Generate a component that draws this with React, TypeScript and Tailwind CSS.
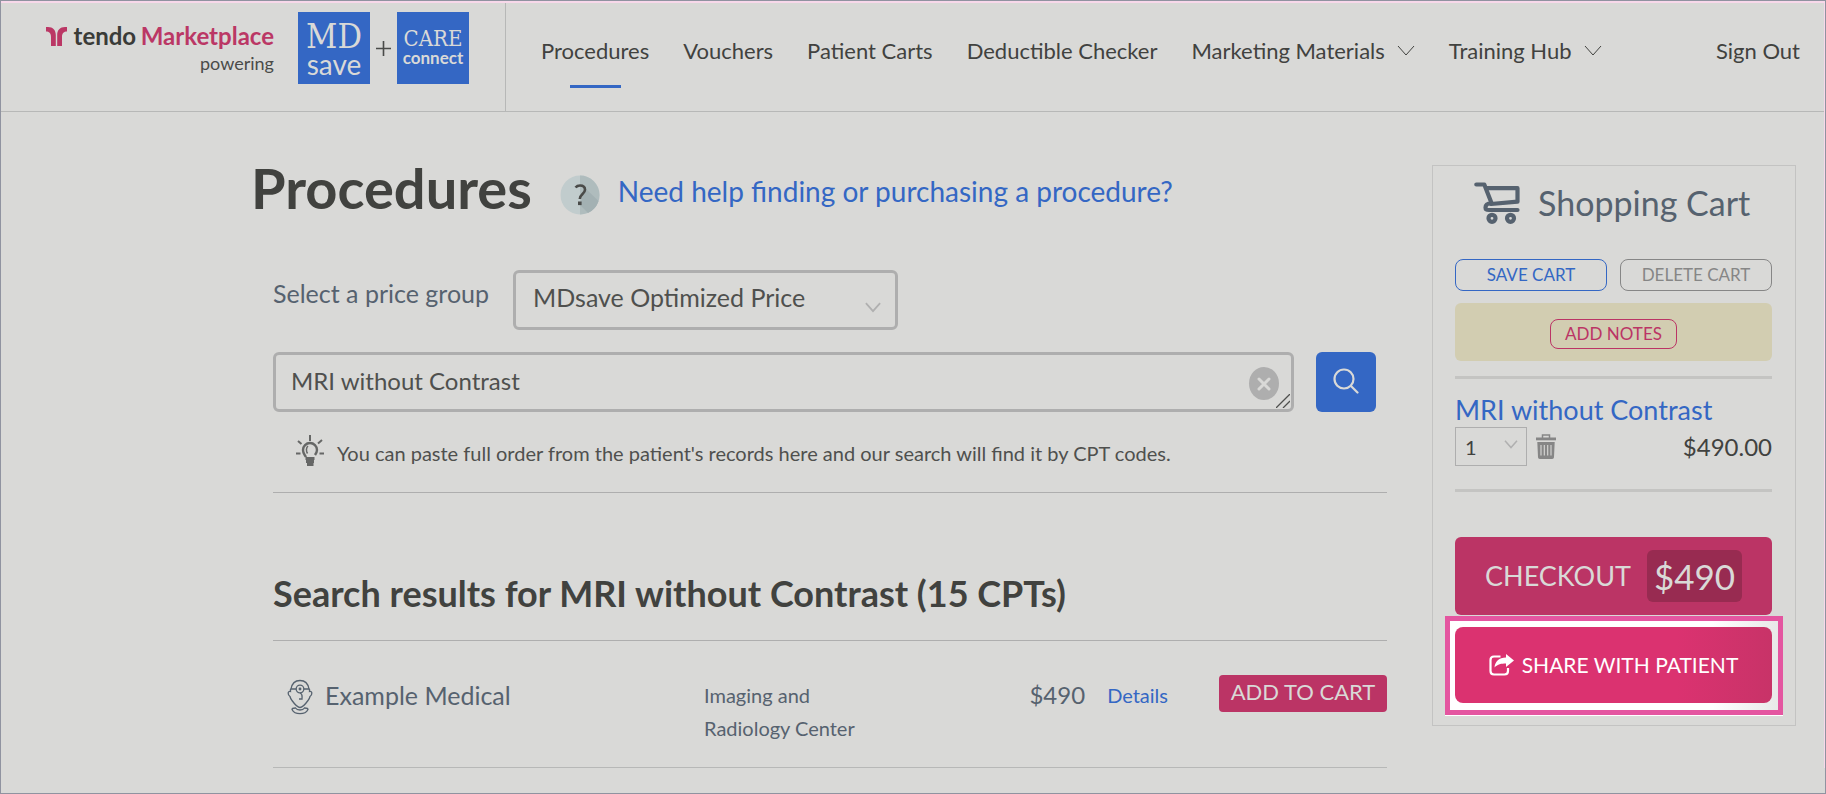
import type { ReactNode } from "react";

interface NavItem {
  label: string;
  active?: boolean;
  menu?: boolean;
}

const NAV_ITEMS: NavItem[] = [
  { label: "Procedures", active: true },
  { label: "Vouchers" },
  { label: "Patient Carts" },
  { label: "Deductible Checker" },
  { label: "Marketing Materials", menu: true },
  { label: "Training Hub", menu: true },
];

const RESULTS = [
  { name: "Example Medical", type: "Imaging and Radiology Center", price: "$490" },
];

function Chevron({ className }: { className: string }) {
  return (
    <svg viewBox="0 0 18 12" fill="none" stroke="currentColor" className={className} aria-hidden="true">
      <path d="M1 1l8 9 8-9" />
    </svg>
  );
}

function TendoMark() {
  return (
    <svg viewBox="0 0 21 19" className="mr-[2px] h-[19px] w-[21px]" fill="#bb3765" aria-hidden="true">
      <path d="M0 0h2c5 0 7.800 3 7.800 8v11H5V10C5 6 3 4.500 0 4.500z" />
      <path d="M21 0h-2c-5 0-7.800 3-7.800 8v11H16V10c0-4 2-5.500 5-5.500z" />
    </svg>
  );
}

function HelpIcon() {
  return (
    <svg viewBox="0 0 40 40" className="size-10 shrink-0" aria-hidden="true">
      <circle cx="20" cy="20" r="19.500" fill="#c1cccd" />
      <path d="M20 .5a19.500 19.500 0 0 1 0 39z" fill="#afbcbd" />
      <path d="M25 13l13.500 13A19.500 19.500 0 0 1 28 38l-8-8z" fill="#a3b1b3" />
      <path
        d="M15.500 12.500c1.200-1.400 2.600-2 4.500-2 3 0 5 1.600 5 4.200 0 4.300-5.200 4.300-5.200 9.300"
        fill="none"
        stroke="#4a4b49"
        strokeWidth="2.600"
      />
      <rect x="18" y="26.500" width="3.600" height="3.600" fill="#4a4b49" />
    </svg>
  );
}

function BulbIcon() {
  return (
    <svg viewBox="0 0 28 31" className="h-[31px] w-7 shrink-0" fill="none" stroke="#666766" aria-hidden="true">
      <path d="M14 0v6M2 6l3.500 3M26 5l-4 3.500M0 18.500h4.500M23.500 18.500H28" strokeWidth="2" />
      <path d="M10 22c-1-2-3-3-3-7a7 7 0 0 1 14 0c0 2-1 3.500-2 5" strokeWidth="2.400" />
      <path d="M12 11c-2 1.500-2 5-.5 7.500" strokeWidth="1.500" />
      <path d="M9.500 23.500h9M10 26.500h8M11 29.500h6.500" strokeWidth="2.800" />
    </svg>
  );
}

function DoctorIcon() {
  return (
    <svg viewBox="0 0 26 36" className="h-9 w-[26px] shrink-0" fill="none" stroke="#56626f" strokeWidth="1.300" aria-hidden="true">
      <path d="M4 10C5 4 8 1.500 13 1.500S21 4 22 10" />
      <path d="M3.500 10H9M17 10h5.500" />
      <circle cx="13" cy="10" r="3.800" />
      <circle cx="13" cy="10" r=".8" fill="#56626f" />
      <path d="M3.500 10v2.500C.5 11.500.5 16 3 17.500c.5 2 1 3 2 4 2.500 3.500 5.500 7 8 7s5.500-3.500 8-7c1-1 1.500-2 2-4 2.500-1.500 2.500-6-.5-5V10" />
      <path d="M13 14c3 1 2 3 2 6h-3" />
      <path d="M8.500 29c-2.500 0-3.500.5-3.500 1.500 1.500 3 4 4.200 8 4.200s6.500-1.200 8-4.200c0-1-1-1.500-3.500-1.500-1 1.500-2.500 2-4.500 2s-3.500-.5-4.500-2z" />
    </svg>
  );
}

function CartIcon() {
  return (
    <svg
      viewBox="0 0 46 42"
      className="h-[42px] w-[46px] shrink-0"
      fill="none"
      stroke="#56626f"
      strokeWidth="4.200"
      strokeLinejoin="round"
      strokeLinecap="round"
      aria-hidden="true"
    >
      <path d="M2.300 2.500h8L17.500 21c-4.500.5-6 2-6 4.500 0 2 1.500 2.500 3.500 2.500h28.500" />
      <path d="M12.500 6.200h31v13.500L17 22" />
      <circle cx="18" cy="36.300" r="3.500" />
      <circle cx="36.500" cy="36.300" r="3.500" />
    </svg>
  );
}

function TrashIcon() {
  return (
    <svg viewBox="0 0 20 25" className="h-[25px] w-5" aria-hidden="true">
      <path d="M6.500 4V1h7v3" fill="none" stroke="#868686" strokeWidth="1.500" />
      <rect y="3.500" width="20" height="2.800" fill="#868686" />
      <path d="M1.300 8h17.400L18 23c0 1-.8 2-1.800 2H3.800c-1 0-1.800-1-1.800-2z" fill="#868686" />
      <path d="M5 11v10.500M8.300 11v10.500M11.700 11v10.500M15 11v10.500" stroke="#d9d9d7" strokeWidth="1.100" />
    </svg>
  );
}

function ShareIcon() {
  return (
    <svg viewBox="0 0 25 22" className="h-[22px] w-[25px] shrink-0" aria-hidden="true">
      <path d="M11.500 2.500H5c-2.500 0-3.500 1-3.500 3.500v11c0 2.500 1 3.500 3.500 3.500h10.500c2.500 0 3.500-1 3.500-3.500v-3" fill="none" stroke="#fff" strokeWidth="2.200" />
      <path d="M17 0l8 6.500-8 6.500V9.500c-5 0-8 .5-11.500 4C6 7.500 10 3.500 17 3.500z" fill="#fff" />
    </svg>
  );
}

function LogoTile({ children }: { children: ReactNode }) {
  return (
    <div className="flex size-[72px] flex-col items-center justify-center bg-[#3467c4] text-[#d9d9d7]">
      {children}
    </div>
  );
}

function Header() {
  return (
    <header className="flex h-[109px] border-b border-[#b7b8b7]">
      <div className="flex w-[505px] shrink-0 items-start border-r border-[#b7b8b7] pt-[9px] pl-[45px]">
        <div className="flex w-[228px] flex-col items-end pt-[9px]">
          <div className="flex w-full items-center justify-between text-2xl leading-[30px] font-bold">
            <TendoMark />
            <span className="text-[#3a3b38]">tendo</span>
            <span className="text-[#bb3765]">Marketplace</span>
          </div>
          <span className="text-lg leading-[24px] text-[#4a4b49]">powering</span>
        </div>
        <div className="ml-6 flex items-center gap-[6px]">
          <LogoTile>
            <span className="font-['DejaVu_Serif_Condensed','DejaVu_Serif',serif] text-[34px] leading-[32px]">MD</span>
            <span className="text-[28px] leading-[24px]">save</span>
          </LogoTile>
          <svg viewBox="0 0 14 14" className="size-[15px]" stroke="#4a4b49" strokeWidth="1.500" aria-label="plus">
            <path d="M7 0v14M0 7h14" />
          </svg>
          <LogoTile>
            <span className="font-['DejaVu_Serif_Condensed','DejaVu_Serif',serif] text-[22px] leading-[20px]">CARE</span>
            <span className="text-[17px] leading-[18px] font-bold">connect</span>
          </LogoTile>
        </div>
      </div>

      <nav className="flex flex-1 items-start gap-[34px] pt-[34px] pr-6 pl-[35px] text-[22px] leading-[28px] whitespace-nowrap text-[#41423f]">
        {NAV_ITEMS.map((item) => (
          <a key={item.label} href="#" className="flex flex-col items-center">
            <span className="flex items-center gap-3">
              {item.label}
              {item.menu && <Chevron className="h-3 w-[18px]" />}
            </span>
            {item.active && <span className="mt-5 h-[3px] w-[51px] bg-[#3467c4]" />}
          </a>
        ))}
        <a href="#" className="ml-auto">
          Sign Out
        </a>
      </nav>
    </header>
  );
}

function SearchForm() {
  return (
    <form className="flex flex-col" onSubmit={(e) => e.preventDefault()}>
      <div className="flex items-start gap-6">
        <label htmlFor="price-group" className="pt-[7px] text-[25px] leading-[32px] text-[#56626f]">
          Select a price group
        </label>
        <div className="relative">
          <select
            id="price-group"
            className="h-[60px] w-[385px] appearance-none rounded-md border-3 border-[#aeaeae] bg-transparent pb-1 pl-[17px] text-[25px] text-[#4f504e]"
          >
            <option>MDsave Optimized Price</option>
          </select>
          <Chevron className="pointer-events-none absolute right-[17px] bottom-[17px] h-[11px] w-4 stroke-2 text-[#b0b0b0]" />
        </div>
      </div>

      <div className="mt-[22px] flex items-start gap-[22px] pr-[11px]">
        <div className="relative flex-1">
          <textarea
            aria-label="Search procedures"
            defaultValue="MRI without Contrast"
            className="block h-[60px] w-full resize-none overflow-hidden rounded-md border-3 border-[#aeaeae] bg-transparent px-[15px] py-[10px] text-2xl leading-[32px] text-[#4f504e]"
          />
          <button
            type="button"
            aria-label="Clear search"
            className="absolute top-[15px] right-[15px] flex h-[33px] w-[30px] items-center justify-center rounded-[50%] bg-[#aeaeae]"
          >
            <svg viewBox="0 0 14 14" className="size-[14px]" stroke="#d9d9d7" strokeWidth="3" strokeLinecap="round">
              <path d="M2 2l10 10M12 2L2 12" />
            </svg>
          </button>
          <svg viewBox="0 0 14 14" className="absolute right-[4px] bottom-[4px] size-[14px]" stroke="#4f504e" strokeWidth="1.300">
            <path d="M0 14L14 0M7 14l7-7" />
          </svg>
        </div>
        <button type="submit" aria-label="Search" className="flex size-[60px] items-center justify-center rounded-md bg-[#3467c4]">
          <svg viewBox="0 0 26 26" className="mb-[2px] size-[26px]" fill="none" stroke="#d9d9d7" strokeWidth="2.200" strokeLinecap="round">
            <circle cx="11" cy="11" r="9.500" />
            <path d="M18 18l6.500 6.500" />
          </svg>
        </button>
      </div>

      <p className="mt-[23px] flex gap-[13px] border-b border-[#aeaeae] pb-[25px] pl-[23px] text-xl text-[#4f504e]">
        <BulbIcon />
        <span className="pt-1">
          You can paste full order from the patient's records here and our search will find it by CPT codes.
        </span>
      </p>
    </form>
  );
}

function Results() {
  return (
    <section className="pt-[78px]">
      <h2 className="border-b border-[#aeaeae] pb-[25px] text-4xl leading-[44px] font-bold text-[#41423f]">
        Search results for MRI without Contrast (15 CPTs)
      </h2>
      <ul>
        {RESULTS.map((result) => (
          <li key={result.name} className="flex h-[127px] items-start border-b border-[#b7b8b7] pt-[34px] text-[#56626f]">
            <div className="flex w-[431px] shrink-0 gap-3 pl-[14px] pt-1 text-[25px] leading-[32px]">
              <DoctorIcon />
              <span>{result.name}</span>
            </div>
            <span className="w-[180px] pt-1 text-xl leading-[33px]">{result.type}</span>
            <span className="ml-auto pt-1 text-2xl">{result.price}</span>
            <a href="#" className="ml-[22px] pt-[6px] text-xl text-[#3467c4]">
              Details
            </a>
            <button
              type="button"
              className="ml-[51px] h-[37px] w-[168px] rounded bg-[#bb3465] pb-1 text-[22px] leading-[30px] text-[#d9d9d7]"
            >
              ADD TO CART
            </button>
          </li>
        ))}
      </ul>
    </section>
  );
}

function ShoppingCart() {
  return (
    <aside className="flex w-[364px] shrink-0 flex-col border border-[#c3c3c2] pr-[23px] pb-[10px] pl-[22px]">
      <h2 className="flex items-center gap-[18px] pt-[14px] pl-[19px] text-[34px] leading-[46px] whitespace-nowrap text-[#56626f]">
        <CartIcon />
        Shopping Cart
      </h2>

      <div className="mt-[33px] flex gap-[13px] text-[17px]">
        <button type="button" className="h-8 flex-1 rounded-lg border border-[#3467c4] text-[#3467c4]">
          SAVE CART
        </button>
        <button type="button" className="h-8 flex-1 rounded-lg border border-[#868686] text-[#868686]">
          DELETE CART
        </button>
      </div>

      <div className="mt-3 flex h-[58px] items-center justify-center rounded-md bg-[#d2cdb1] pt-1">
        <button type="button" className="h-[30px] w-[127px] rounded-lg border border-[#bb3465] text-[17px] text-[#bb3465]">
          ADD NOTES
        </button>
      </div>

      <div className="mt-[15px] h-[116px] border-y-3 border-[#c4c4c2] pt-[13px]">
        <a href="#" className="block text-[27px] leading-[35px] text-[#3467c4]">
          MRI without Contrast
        </a>
        <div className="flex items-center">
          <div className="relative">
            <select
              aria-label="Quantity"
              className="block h-[39px] w-[72px] appearance-none border border-[#aeaeae] bg-transparent pl-[9px] text-xl text-[#41423f]"
            >
              <option>1</option>
            </select>
            <Chevron className="pointer-events-none absolute top-[13px] right-[9px] h-[9px] w-[14px] stroke-2 text-[#b0b0b0]" />
          </div>
          <button type="button" aria-label="Remove item" className="ml-[9px]">
            <TrashIcon />
          </button>
          <span className="ml-auto text-2xl text-[#41423f]">$490.00</span>
        </div>
      </div>

      <button
        type="button"
        className="mt-[45px] flex h-[78px] items-center justify-center gap-4 rounded-md bg-[#bb3465] text-[#d9d9d7]"
      >
        <span className="text-[27px]">CHECKOUT</span>
        <span className="flex h-[52px] w-[95px] items-center justify-center rounded-md bg-[#982b51] text-[35px]">$490</span>
      </button>

      {/* Spotlight frame around the share action */}
      <div className="-mr-[11px] -ml-[10px] mt-px border-5 border-[#e455a0] bg-linear-to-r from-white from-80% to-[#e8e8e8] pt-[6px] pr-[6px] pb-[7px] pl-[5px] shadow-[0_1px_0_#ffffff]">
        <button
          type="button"
          className="flex h-[76px] w-full items-center justify-center gap-2 rounded-lg bg-linear-to-r from-[#db3270] from-70% to-[#c83368] text-[21px] text-white"
        >
          <ShareIcon />
          SHARE WITH PATIENT
        </button>
      </div>
    </aside>
  );
}

export default function App() {
  return (
    <div className="min-h-screen border border-[#9093a0] bg-[#d9d9d7] font-[Lato,sans-serif]">
      <div className="border-t-2 border-r border-[#f8d8ea]">
        <Header />
        <div className="flex items-start gap-[45px] pt-[53px] pr-[28px] pl-[272px]">
          <main className="min-w-0 flex-1">
            <div className="-ml-[22px] flex h-12 items-center">
              <h1 className="pb-[2px] text-[56px] leading-[48px] font-bold text-[#41423f]">Procedures</h1>
              <div className="ml-7 flex items-center gap-[18px] pt-3">
                <HelpIcon />
                <a href="#" className="pb-2 text-[28px] leading-[36px] text-[#3467c4]">
                  Need help finding or purchasing a procedure?
                </a>
              </div>
            </div>
            <div className="pt-[57px]">
              <SearchForm />
            </div>
            <Results />
          </main>
          <ShoppingCart />
        </div>
      </div>
    </div>
  );
}
